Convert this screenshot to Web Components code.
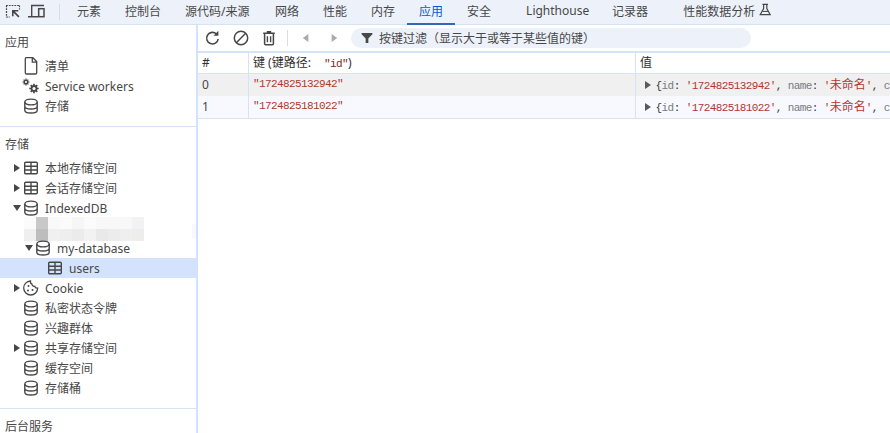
<!DOCTYPE html>
<html><head><meta charset="utf-8">
<style>
html,body{margin:0;padding:0;height:100%;overflow:hidden;background:#fff}
body{font:12px "Noto Sans","Noto Sans CJK SC",sans-serif;color:#474747}
</style></head>
<body>
<dt-app></dt-app>
<script>
const ICONS={
 inspect:'<path d="M1 3.500h14M1.500 3.500v12M14.500 3.500v4M1.500 15h3.500" fill="none" stroke="currentColor" stroke-width="1.200" stroke-dasharray="1.800 1"/><path d="M7 8h6.300v1.600h-3.500l4.700 4.600-1.200 1.200-4.700-4.600v3.400H7z" fill="currentColor"/>',
 device:'<path d="M18 3.500H5.700v11M2 14.700h10" fill="none" stroke="currentColor" stroke-width="1.400"/><rect x="12.700" y="6.700" width="5.300" height="8" fill="none" stroke="currentColor" stroke-width="1.500"/>',
 file:'<path d="M4 1.700h6.800L14.700 5.600V16.800c0 .7-.5 1.200-1.200 1.200H4.500c-.7 0-1.200-.5-1.200-1.200V2.700c0-.6.300-1 .7-1zM10.300 1.700v4.500h4.400" fill="none" stroke="currentColor" stroke-width="1.300"/>',
 db:'<ellipse cx="9" cy="6" rx="6.200" ry="2.900" fill="none" stroke="currentColor" stroke-width="1.400"/><path d="M2.800 6v8.200c0 1.600 2.800 2.800 6.200 2.800s6.200-1.200 6.200-2.800V6M2.800 10.300c0 1.500 2.800 2.700 6.200 2.700s6.200-1.200 6.200-2.700" fill="none" stroke="currentColor" stroke-width="1.400"/>',
 table:'<rect x="2.700" y="4.200" width="12.600" height="11.600" rx="1" fill="none" stroke="currentColor" stroke-width="1.400"/><path d="M2.700 8.200h12.600M2.700 12h12.600M9 4.200v11.600" fill="none" stroke="currentColor" stroke-width="1.400"/>',
 cookie:'<path d="M8.500 3a7 7 0 1 0 7.200 7.100c-1.400.2-2.600-.6-2.900-1.800-1.600.3-3-.9-3-2.500-1-.2-1.500-1.600-1.300-2.800z" fill="none" stroke="currentColor" stroke-width="1.300"/><circle cx="6.500" cy="8" r="1" fill="currentColor"/><circle cx="6" cy="12.500" r="1" fill="currentColor"/><circle cx="10.500" cy="12" r="1" fill="currentColor"/>',
 refresh:'<path d="M15.200 11a5.800 5.800 0 1 1-1.700-5" fill="none" stroke="currentColor" stroke-width="1.600"/><path d="M15.400 2.800v4.900h-4.900z" fill="currentColor"/>',
 block:'<circle cx="10" cy="10" r="6.700" fill="none" stroke="currentColor" stroke-width="1.500"/><path d="M5.300 14.700l9.400-9.400" stroke="currentColor" stroke-width="1.500"/>',
 trash:'<path d="M7.800 3h4.400v1.500h3.600V6H4.200V4.500h3.600z" fill="currentColor"/><path d="M5.600 6v9.800c0 .6.400 1 1 1h6.800c.6 0 1-.4 1-1V6" fill="none" stroke="currentColor" stroke-width="1.500"/><path d="M8.400 8.300v6M11.600 8.300v6" stroke="currentColor" stroke-width="1.400"/>',
 flask:'<path d="M5.500 1.800h7M7 1.800v5.200L2.800 14.600h12.400L11 7V1.800" fill="none" stroke="currentColor" stroke-width="1.500"/><path d="M5.500 10.500h7" stroke="currentColor" stroke-width="1.300"/>',
 filter:'<path d="M4 4.500h12v1.300l-4.500 4.700v5h-3v-5L4 5.800z" fill="currentColor"/>',
 left:'<path d="M13 5v10L6 10z" fill="currentColor"/>',
 right:'<path d="M7 5v10l7-5z" fill="currentColor"/>',
 gear:'<g fill="none" stroke="currentColor"><circle cx="4" cy="6" r="1.800" stroke-width="1.500"/><path d="M4 2.500v1.200M4 8.300v1.200M.5 6h1.200M6.300 6h1.200M1.600 3.600l.8.8M5.600 7.600l.8.800M6.400 3.600l-.8.800M2.400 7.600l-.8.800" stroke-width="1.200"/><circle cx="12" cy="12.500" r="2.500" stroke-width="1.800"/><path d="M12 7.800v1.800M12 15.400v1.800M7.300 12.500h1.800M14.900 12.500h1.800M8.700 9.200l1.300 1.300M14 14.500l1.300 1.300M15.300 9.200l-1.300 1.300M10 14.500l-1.300 1.300" stroke-width="1.700"/></g>'
};
function el(name,tpl,extra){
  const t=document.createElement('template');t.innerHTML=tpl;
  customElements.define(name,class extends HTMLElement{
    constructor(){super();this.attachShadow({mode:'open'}).append(t.content.cloneNode(true));if(extra)extra(this)}
  });
}
customElements.define('dt-icon',class extends HTMLElement{
  constructor(){super();this.attachShadow({mode:'open'})}
  connectedCallback(){
    const s=this.getAttribute('size')||20,c=this.getAttribute('color')||'#474747';
    this.shadowRoot.innerHTML=`<style>:host{display:inline-flex;flex:none;width:${s}px;height:${s}px;color:${c}}svg{display:block}</style><svg width="${s}" height="${s}" viewBox="0 0 20 20">${ICONS[this.getAttribute('name')]||''}</svg>`;
  }
});
el('dt-tab',`<style>:host{display:flex;align-items:center;height:24px;padding:0 12px 3px;box-sizing:border-box;white-space:nowrap;color:#474747;position:relative;gap:3px}
:host([selected]){color:#0b57d0}
:host([selected])::after{content:"";position:absolute;left:0;right:0;bottom:-1px;height:2px;background:#2f6ab5}
</style><slot></slot>`);
el('dt-tabbar',`<style>:host{display:flex;height:25px;box-sizing:border-box;background:#edf2fa;border-bottom:1px solid #d6e2f5;align-items:stretch}
.tools{display:flex;align-items:center;padding-left:5px;gap:1px;width:59px;box-sizing:border-box}
.sep{width:1px;height:16px;background:#d6dde8;align-self:center;margin-right:5px}
</style>
<div class="tools"><dt-icon name="inspect"></dt-icon><dt-icon name="device"></dt-icon></div><div class="sep"></div><slot></slot>`);
el('dt-section',`<style>:host{display:block;border-bottom:1px solid #d6e2f5;padding:0 0 10px}
:host(:last-child){border-bottom:0;padding:0}
.t{padding:12px 0 7px 5px;line-height:12px;color:#474747}
:host(:last-child) .t{padding-bottom:0}
</style><div class="t" id="t"></div><slot></slot>`);
el('dt-item',`<style>:host{display:flex;align-items:center;height:20px;white-space:nowrap;color:#474747;position:relative;box-sizing:border-box}
:host([selected]){background:#d3e3fd}
.a{width:11px;flex:none;display:flex;justify-content:center;margin-left:var(--arrow-x,11px)}
.a i{display:block;width:0;height:0}
:host([arrow=r]) .a i{border-left:6px solid #474747;border-top:4px solid transparent;border-bottom:4px solid transparent}
:host([arrow=d]) .a i{border-top:6px solid #474747;border-left:4px solid transparent;border-right:4px solid transparent}
.l{margin-left:3px}
</style><span class="a"><i></i></span><slot name="icon"></slot><span class="l"><slot></slot></span>`);
el('dt-blur',`<style>:host{display:block;height:20px;position:relative}
.m{position:absolute;left:24px;top:-1px;width:120px;height:24px;display:grid;grid-template-columns:repeat(10,12px);grid-template-rows:repeat(2,12px);filter:blur(.7px);overflow:hidden}
.p{position:absolute;left:192px;top:6px;width:12px;height:14px;background:#f8f9fe}
</style><div class="m" id="m"></div><div class="p"></div>`,host=>{
 const m=host.shadowRoot.getElementById('m');
 ['#fbfbfb','#c8c8c8','#f9f9f9','#fbfbfb','#f6f6f6','#fbfbfb','#f8f8f8','#f8f8f8','#f8f8f8','#f2f2f2',
  '#efefef','#bdbdbd','#f0f0f0','#eeeeee','#ebebeb','#f2f2f2','#e9e9e9','#ececec','#efefef','#efedeb'].forEach(c=>{
  const d=document.createElement('div');d.style.background=c;m.append(d);});
});
el('dt-sidebar',`<style>:host{display:block;width:198px;flex:none;box-sizing:border-box;border-right:2px solid #d3e3fd;overflow:hidden;height:100%}</style><slot></slot>`);
el('dt-toolbar',`<style>:host{display:flex;align-items:center;height:28px;box-sizing:border-box;background:#fff;border-bottom:2px solid #d6e2f5;padding-left:5px}
.sep{width:1px;height:16px;background:#d6dde8;margin:0 7px 0 8px}
.f{display:flex;align-items:center;height:20px;width:400px;background:#edf2fa;border-radius:10px;margin-left:9px;padding-left:7px;box-sizing:border-box;color:#474747}
.f span{margin-left:3px}
</style>
<dt-icon name="refresh"></dt-icon><dt-icon name="block" style="margin-left:8px"></dt-icon><dt-icon name="trash" style="margin-left:8px"></dt-icon>
<div class="sep"></div>
<dt-icon name="left" size="16" color="#a8abb0" style="margin-left:3px"></dt-icon><dt-icon name="right" size="16" color="#a8abb0" style="margin-left:12px"></dt-icon>
<div class="f"><dt-icon name="filter" size="18"></dt-icon><span>按键过滤（显示大于或等于某些值的键）</span></div>`);
el('dt-row',`<style>:host{display:grid;grid-template-columns:50px 387px 1fr;height:22px;box-sizing:border-box;background:#f8f9ff;white-space:nowrap;overflow:hidden}
:host([alt]){background:#f0f0f0}
:host([head]){background:#fff;height:21px;color:#303030;border-bottom:1px solid #d6e2f5}
:host([last]){height:23px;border-bottom:1px solid #d6e2f5}
::slotted(*){padding-left:4px;border-left:1px solid #d6e2f5;overflow:hidden}
::slotted(:first-child){border-left:0}
</style><slot></slot>`);
el('dt-value',`<style>:host{display:block;font:11px/22px "Liberation Mono","Noto Sans CJK SC",monospace;letter-spacing:-.6px;color:#303942;white-space:nowrap;padding-top:1px}
.k{color:#777b80}.s{color:#b5352e}
.c{font-size:12px;letter-spacing:0}
.tri{display:inline-block;width:0;height:0;border-left:6px solid #5a5a5a;border-top:4px solid transparent;border-bottom:4px solid transparent;margin:0 4.600px 0 5px}
</style><span class="tri"></span>{<span class="k">id</span>: <span class="s"><slot name="id"></slot></span>, <span class="k">name</span>: <span class="s">'<span class="c">未命名</span>'</span>, <span class="k">c</span>`);
el('dt-app',`<style>:host{display:flex;flex-direction:column;height:433px;width:890px;overflow:hidden}
.b{display:flex;flex:1;min-height:0}.m{flex:1;min-width:0;overflow:hidden}
.cell{line-height:20px}
.v{line-height:21px}
.str{font:11px/21px "Liberation Mono",monospace;letter-spacing:-.6px;color:#b5352e}
.hm{font:11px "Liberation Mono",monospace;letter-spacing:-.6px;margin-left:10px}
.hm b{font-weight:400;color:#7a2a26}
dt-item.i2{--arrow-x:22px}
dt-item.i3{--arrow-x:35px}
</style>
<dt-tabbar>
<dt-tab>元素</dt-tab><dt-tab>控制台</dt-tab><dt-tab style="width:90px">源代码/来源</dt-tab><dt-tab>网络</dt-tab><dt-tab>性能</dt-tab><dt-tab>内存</dt-tab><dt-tab selected>应用</dt-tab><dt-tab>安全</dt-tab><dt-tab style="padding:0 23px 3px;width:109px">Lighthouse</dt-tab><dt-tab style="padding:0 36px 3px 0">记录器</dt-tab><dt-tab style="padding:0 0 3px;margin-left:-1px">性能数据分析<dt-icon name="flask" size="16"></dt-icon></dt-tab>
</dt-tabbar>
<div class="b">
<dt-sidebar>
<dt-section title="应用"><dt-item><dt-icon slot="icon" name="file"></dt-icon>清单</dt-item><dt-item><dt-icon slot="icon" name="gear"></dt-icon>Service workers</dt-item><dt-item><dt-icon slot="icon" name="db"></dt-icon>存储</dt-item></dt-section>
<dt-section title="存储"><dt-item arrow="r"><dt-icon slot="icon" name="table"></dt-icon>本地存储空间</dt-item><dt-item arrow="r"><dt-icon slot="icon" name="table"></dt-icon>会话存储空间</dt-item><dt-item arrow="d"><dt-icon slot="icon" name="db"></dt-icon>IndexedDB</dt-item><dt-blur></dt-blur><dt-item arrow="d" class="i2" style="padding-left:1px"><dt-icon slot="icon" name="db"></dt-icon>my-database</dt-item><dt-item selected class="i3"><dt-icon slot="icon" name="table"></dt-icon>users</dt-item><dt-item arrow="r"><dt-icon slot="icon" name="cookie"></dt-icon>Cookie</dt-item><dt-item><dt-icon slot="icon" name="db"></dt-icon>私密状态令牌</dt-item><dt-item><dt-icon slot="icon" name="db"></dt-icon>兴趣群体</dt-item><dt-item arrow="r"><dt-icon slot="icon" name="db"></dt-icon>共享存储空间</dt-item><dt-item><dt-icon slot="icon" name="db"></dt-icon>缓存空间</dt-item><dt-item><dt-icon slot="icon" name="db"></dt-icon>存储桶</dt-item></dt-section>
<dt-section title="后台服务"></dt-section>
</dt-sidebar>
<div class="m">
<dt-toolbar></dt-toolbar>
<dt-row head><div class="cell">#</div><div class="cell">键 (键路径: <span class="hm"><b>"id"</b></span>)</div><div class="cell">值</div></dt-row>
<dt-row alt><div class="v">0</div><div class="str">"1724825132942"</div><div><dt-value><span slot="id">'1724825132942'</span></dt-value></div></dt-row>
<dt-row last><div class="v">1</div><div class="str">"1724825181022"</div><div><dt-value><span slot="id">'1724825181022'</span></dt-value></div></dt-row>
</div>
</div>`);
customElements.upgrade(document.body);
document.querySelector('dt-app').shadowRoot.querySelectorAll('dt-section').forEach(s=>{s.shadowRoot.getElementById('t').textContent=s.getAttribute('title')});
</script>
</body></html>
